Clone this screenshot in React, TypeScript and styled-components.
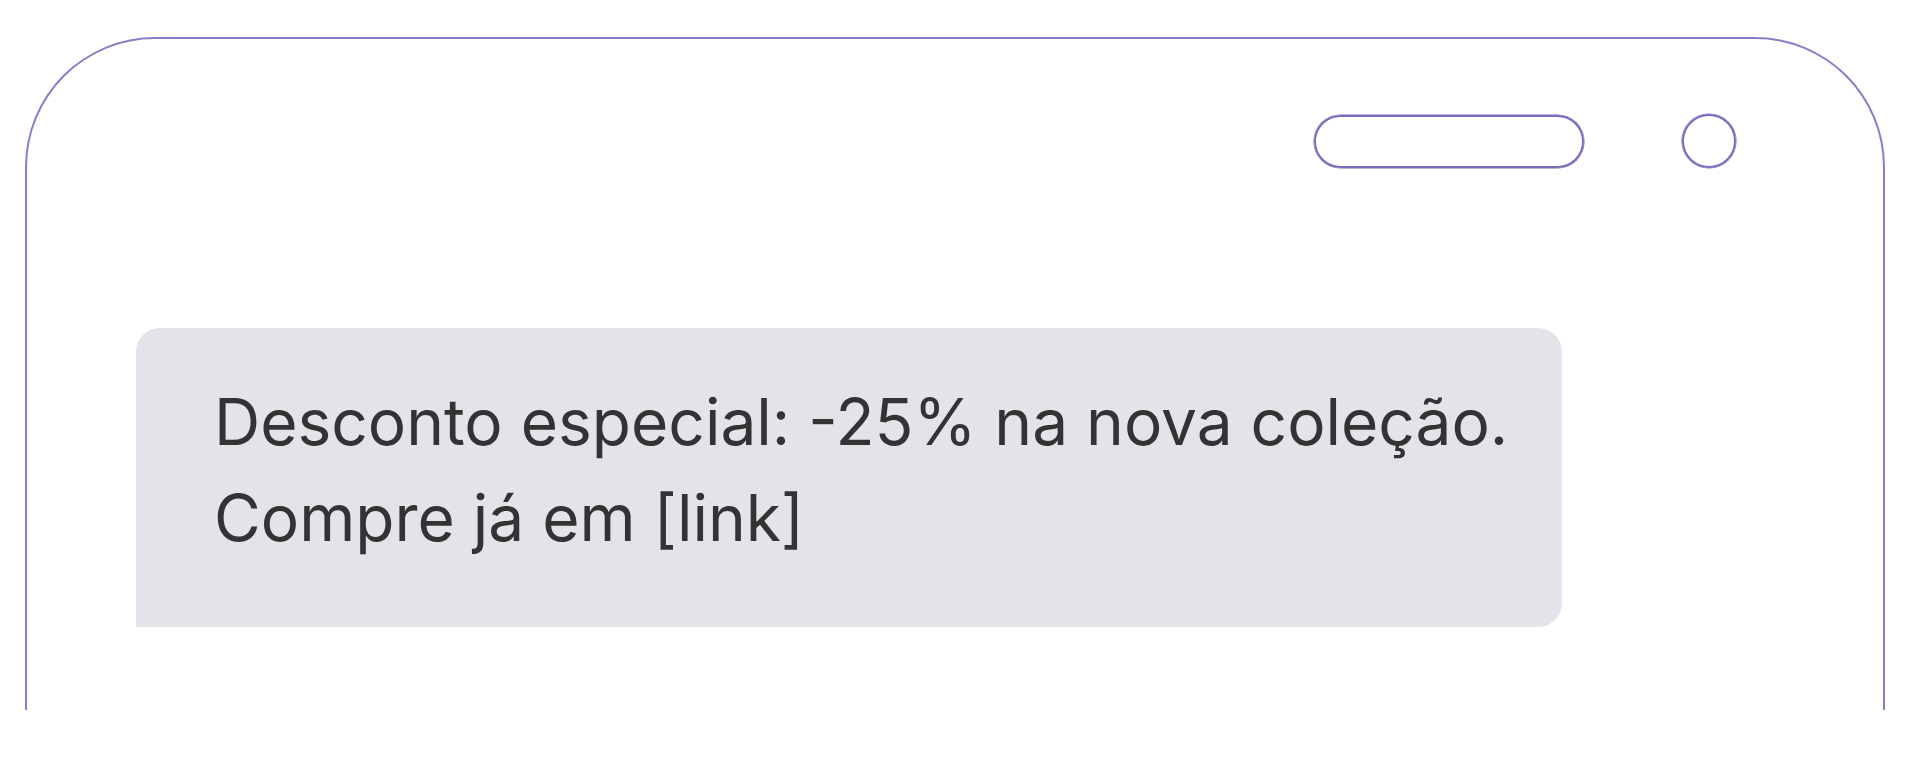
import React from 'react';
import styled, { createGlobalStyle } from 'styled-components';

const colors = {
    frame: '#8a7dc7',
    stroke: '#7b6bbb',
    bubble: '#e4e3ea',
    text: '#333333',
    page: '#ffffff',
};

const GlobalStyle = createGlobalStyle`
    *, *::before, *::after {
        box-sizing: border-box;
    }

    html, body {
        margin: 0;
        padding: 0;
        background: ${colors.page};
        font-family: Inter, "Noto Sans", "Liberation Sans", sans-serif;
    }
`;

// ============================== Phone frame ==============================

const Page = styled.div`
    width: 1919px;
    height: 778px;
    padding: 37px 0 0 25px;
    overflow: hidden;
`;

const PhoneFrame = styled.div`
    width: 1860px;
    height: 673px;

    display: flex;
    flex-direction: column;

    border: 2px solid ${colors.frame};
    border-bottom: none;
    border-radius: 130px 130px 0 0;
`;

const TopBar = styled.div`
    display: flex;
    flex-direction: row;
    justify-content: flex-end;
    align-items: center;
    gap: 98px;

    padding: 75px 147px 0 0;
`;

const Speaker = styled.div`
    width: 270px;
    height: 53px;
    border: 2px solid ${colors.stroke};
    box-shadow: 0 0 0 0.6px ${colors.stroke};
    border-radius: 27px;
`;

const Camera = styled.div`
    width: 54px;
    height: 54px;
    border: 2px solid ${colors.stroke};
    box-shadow: 0 0 0 0.6px ${colors.stroke};
    border-radius: 50%;
`;

// ============================== Message ==============================

const ChatBody = styled.div`
    display: flex;
    flex-direction: column;
    align-items: flex-start;

    padding: 160px 0 0 109px;
`;

const Bubble = styled.div`
    width: 1426px;
    height: 299px;

    padding: 46px 40px 0 78px;

    background-color: ${colors.bubble};
    border-radius: 24px 24px 24px 0;
`;

const MessageText = styled.p`
    margin: 0;

    font-size: 64px;
    line-height: 96px;
    font-weight: 400;
    color: ${colors.text};
    white-space: nowrap;
`;

export default function App(): JSX.Element {
    return (
        <>
            <GlobalStyle />
            <Page>
                <PhoneFrame>
                    <TopBar>
                        <Speaker />
                        <Camera />
                    </TopBar>
                    <ChatBody>
                        <Bubble>
                            <MessageText>
                                Desconto especial: -25% na nova coleção.
                                <br />
                                Compre já em [link]
                            </MessageText>
                        </Bubble>
                    </ChatBody>
                </PhoneFrame>
            </Page>
        </>
    );
}
